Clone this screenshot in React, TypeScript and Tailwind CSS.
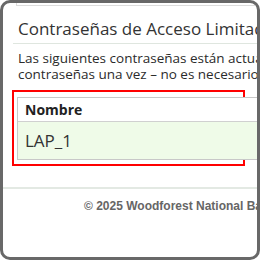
export default function App() {
  return (
    <div className="w-[260px] h-[260px] bg-white border-[3px] border-[#686868] rounded-[10px] overflow-hidden" style={{ fontFamily: '"Open Sans", sans-serif' }}>
      <div className="ml-[13px] h-[3px] border-l border-b border-[#dcdcdc]" />
      <div className="pl-[15px] pt-[11px] text-[17px] leading-[24px] text-[#333] whitespace-nowrap">Contraseñas de Acceso Limitado</div>
      <div className="ml-[10px] mt-[2px] h-px bg-[#dfe6df]" />
      <div className="pl-[15px] pt-[6px] text-[13.5px] leading-[16px] text-[#2b2b2b] whitespace-nowrap">
        <div>Las siguientes contraseñas están actualmente</div>
        <div>contraseñas una vez – no es necesario</div>
      </div>
      <div className="ml-[9px] mt-[8px] w-[233px] h-[76px] border-2 border-[#ff0000] pt-[5px] pl-[3px]">
        <div className="w-[260px] border border-[#c8c8c8]">
          <div className="h-[24px] flex items-center pl-[7px] bg-white border-b border-[#d0d0d0] text-[14px] font-bold text-[#222]">Nombre</div>
          <div className="h-[37px] flex items-center pl-[7px] bg-[#effbe8] text-[17px] text-[#333]">LAP_1</div>
        </div>
      </div>
      <div className="mt-[21px] h-[2px] bg-[#e3e9e3]" />
      <div className="pl-[81px] pt-[8px] text-[12px] font-bold text-[#666] whitespace-nowrap" style={{ fontFamily: '"Liberation Sans", Arial, sans-serif' }}>© 2025 Woodforest National Bank</div>
    </div>
  );
}
